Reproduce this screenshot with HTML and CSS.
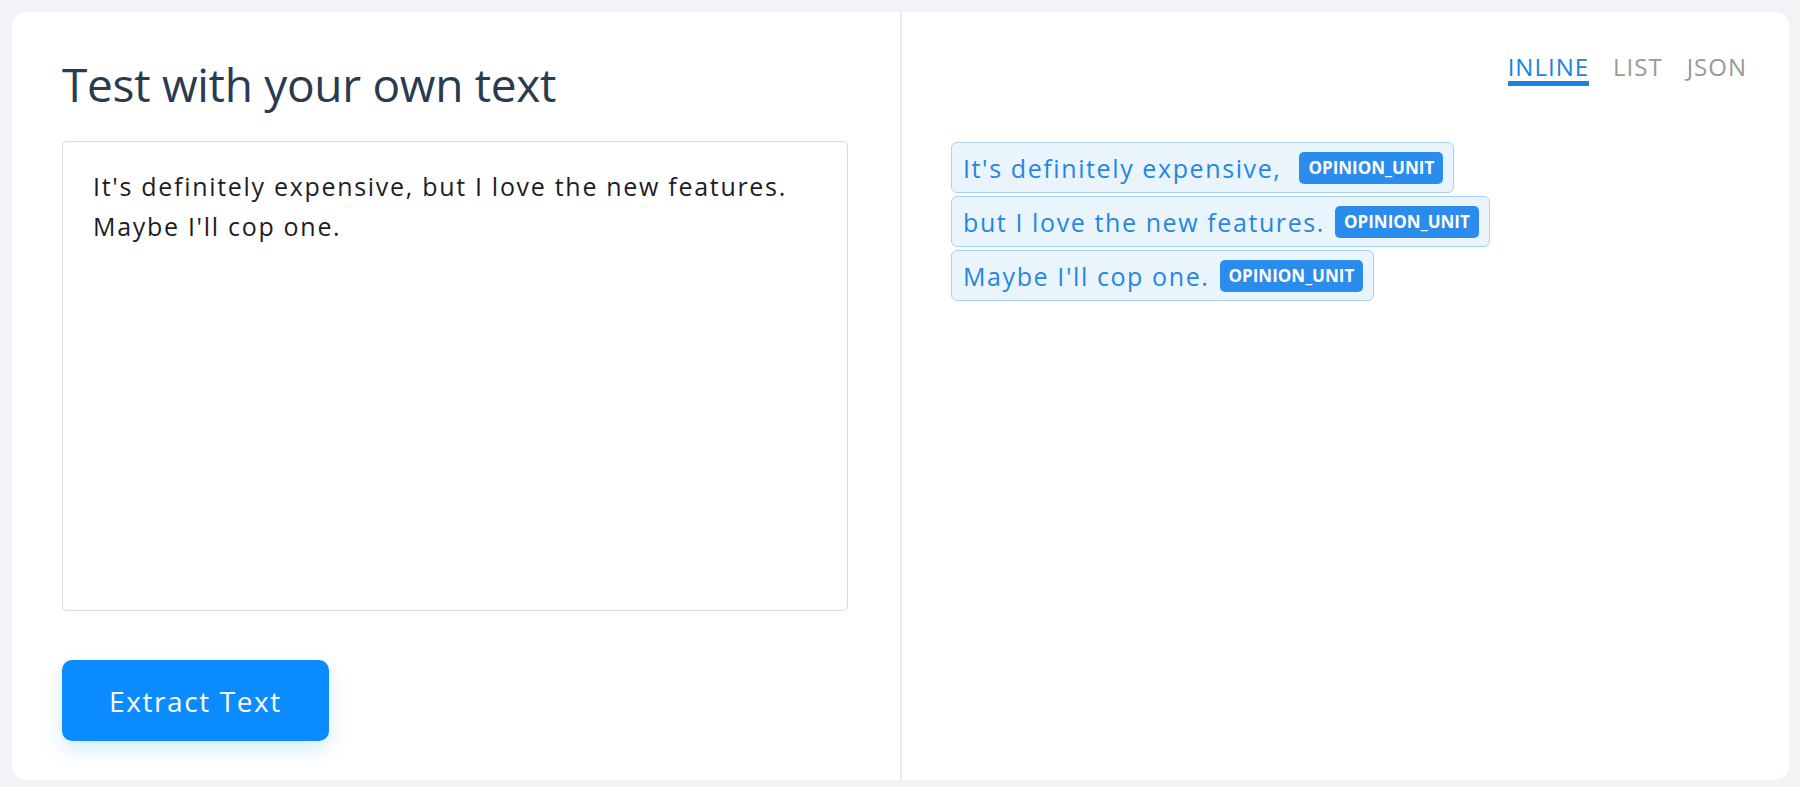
FILE: index.html
```html
<!DOCTYPE html>
<html lang="en">
<head>
<meta charset="utf-8">
<title>Test with your own text</title>
<link rel="stylesheet" href="styles.css">
</head>
<body>
<div class="card">
  <section class="left">
    <h1 class="title">Test with your own text</h1>
    <div class="input">It's definitely expensive, but I love the new features. Maybe I'll cop one.</div>
    <button class="btn" type="button">Extract Text</button>
  </section>
  <section class="right">
    <nav class="tabs">
      <span class="tab active">INLINE</span>
      <span class="tab">LIST</span>
      <span class="tab">JSON</span>
    </nav>
    <div class="chips">
      <span class="chip">It's definitely expensive,&nbsp;<span class="badge">OPINION_UNIT</span></span>
      <span class="chip">but I love the new features.<span class="badge">OPINION_UNIT</span></span>
      <span class="chip">Maybe I'll cop one.<span class="badge">OPINION_UNIT</span></span>
    </div>
  </section>
</div>
</body>
</html>
```
FILE: styles.css
```css
html, body {
  margin: 0;
  padding: 0;
  background: #f1f3f7;
  font-family: "Open Sans", "Noto Sans", sans-serif;
}
body {
  padding: 12px 11px 7px 12px;
  height: 787px;
  box-sizing: border-box;
}
.card {
  background: #fff;
  border-radius: 14px;
  height: 768px;
  display: grid;
  grid-template-columns: 890px 1fr;
  box-shadow: 0 0 2px rgba(0,0,0,0.03);
}
.left {
  border-right: 2px solid #ececf0;
  padding: 0 52px 0 50px;
  display: flex;
  flex-direction: column;
  align-items: flex-start;
}
.title {
  margin: 41px 0 0 0;
  font-size: 46px;
  line-height: 62px;
  font-weight: 400;
  color: #2a3b4f;
  letter-spacing: -0.3px;
}
.input {
  margin-top: 26px;
  box-sizing: border-box;
  width: 786px;
  height: 470px;
  border: 1.5px solid #d9d9dc;
  border-radius: 5px;
  padding: 24px 30px;
  font-size: 25px;
  line-height: 40px;
  letter-spacing: 1.7px;
  color: #1d1d1f;
}
.btn {
  margin-top: 49px;
  width: 267px;
  height: 81px;
  border: none;
  border-radius: 10px;
  background: #0a8bff;
  color: #fff;
  font-family: inherit;
  font-size: 28px;
  letter-spacing: 1.6px;
  box-shadow: 0 8px 20px rgba(10, 139, 255, 0.18);
}
.right {
  padding: 0 42px 0 49px;
  display: flex;
  flex-direction: column;
}
.tabs {
  display: flex;
  justify-content: flex-end;
  gap: 24px;
  margin-top: 40px;
}
.tab {
  font-size: 24px;
  line-height: 29px;
  letter-spacing: 1px;
  color: #9a9a9a;
  border-bottom: 5px solid transparent;
}
.tab.active {
  color: #1a82e2;
  border-bottom-color: #1a82e2;
}
.chips {
  margin-top: 56px;
  display: flex;
  flex-direction: column;
  align-items: flex-start;
  gap: 3px;
}
.chip {
  display: inline-flex;
  align-items: center;
  height: 51px;
  box-sizing: border-box;
  padding: 0 10px 0 11px;
  background: #eaf4fd;
  border: 1.5px solid #a9d1f5;
  border-radius: 6px;
  font-size: 25px;
  letter-spacing: 1.6px;
  color: #2387e3;
  white-space: pre;
}
.badge {
  margin-left: 10px;
  height: 32px;
  display: inline-flex;
  align-items: center;
  padding: 0 9px;
  background: #2a8ded;
  color: #fff;
  border-radius: 5px;
  font-size: 17px;
  font-weight: 700;
  letter-spacing: 0;
}
```
